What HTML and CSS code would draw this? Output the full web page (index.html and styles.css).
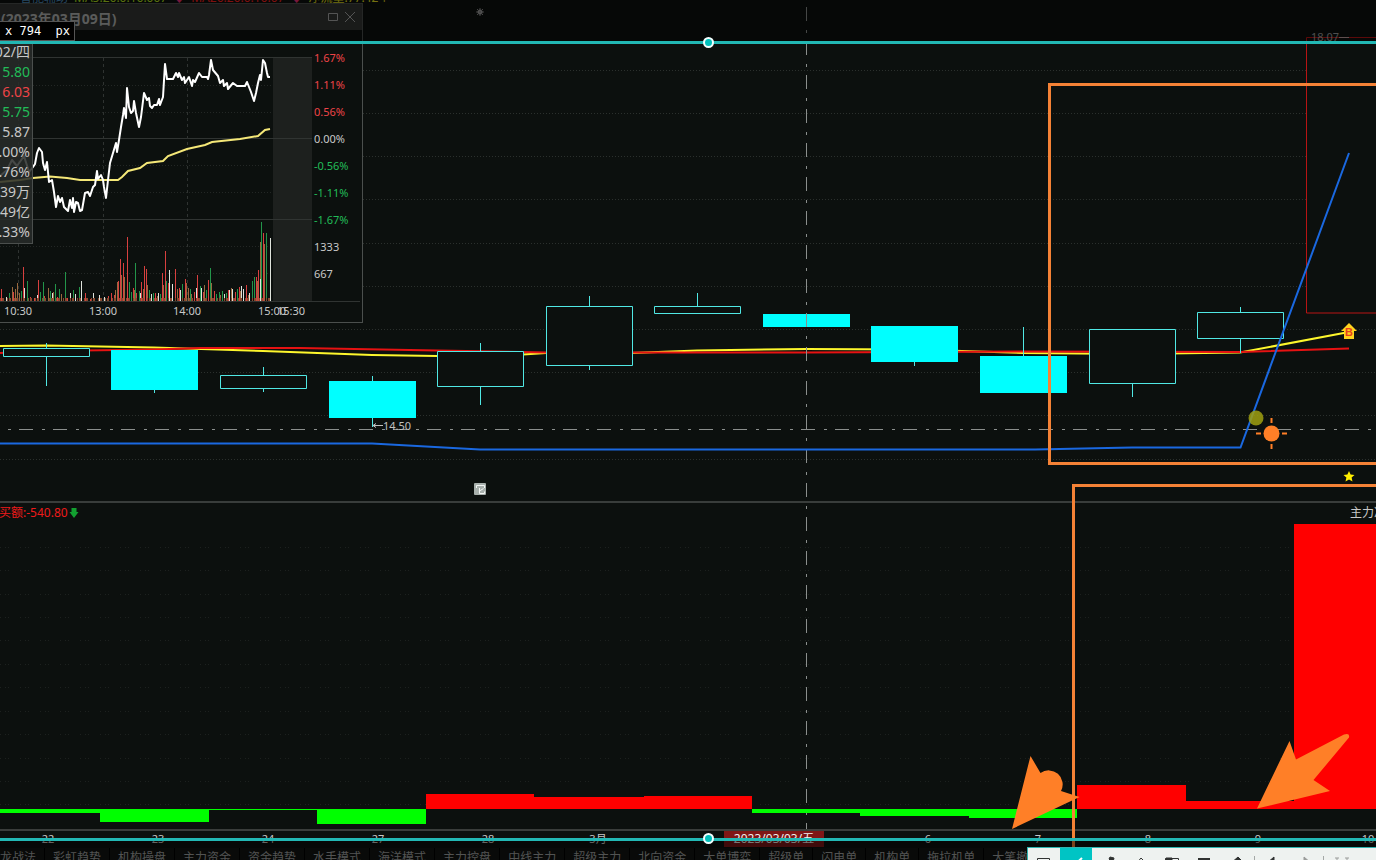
FILE: index.html
```html
<!DOCTYPE html>
<html lang="zh-CN">
<head>
<meta charset="utf-8">
<title>K线图</title>
<link rel="stylesheet" href="styles.css">
</head>
<body>
<div class="screen">
  <header class="ticker">
    <span class="t-blue">智能辅助</span>
    <span class="t-lime">MA5:26.0:16.007</span><span class="t-pink">⬇</span>
    <span class="t-red">MA26:26.0:16.07</span><span class="t-pink">⬇</span>
    <span class="t-yellow">净流量:77.42↑</span>
  </header>

  <main class="chart">
    <svg class="plot" viewBox="0 0 1376 830" preserveAspectRatio="xMinYMin slice" role="img" aria-label="K线">
      <g class="grid">
        <path d="M363 70.500H1306M363 113.500H1306M363 156.500H1306M363 199.500H1306M363 243.500H1306M363 286.500H1306M0 329.500H1376M0 372.500H1376M0 415.500H1376M0 459.500H1376"/>
        <path class="faint" d="M0 547.500H1376M0 570.500H1376M0 594.500H1376M0 617.500H1376M0 640.500H1376M0 664.500H1376M0 687.500H1376M0 711.500H1376M0 734.500H1376M0 758.500H1376M0 781.500H1376M0 804.500H1376"/>
      </g>
      <path class="rule" d="M0 502H1376"/>
      <path class="ma-yellow" d="M0 346 46 345.500 154 347.500 263 351 372 355 437 356 480 356 523 354.500 546 353 632 353 697 350.500 806 349 914 349.500 1023 353 1132 354 1240 352.500 1349 332"/>
      <path class="ma-red" d="M0 353 46 351 154 349.500 200 348 300 348 437 350.500 546 352.500 806 352.500 914 352 1023 351.500 1240 352 1349 348.500"/>
      <g class="hollow">
        <path d="M3.500 348.500h86v8h-86zM220.500 375.500h86v13h-86zM437.500 351.500h86v35h-86zM546.500 306.500h86v59h-86zM654.500 306.500h86v7h-86zM1089.500 329.500h86v54h-86zM1197.500 312.500h86v26h-86z"/>
      </g>
      <path class="wick" d="M46.500 343v5M46.500 357v29M154.500 390v3M263.500 367v8M263.500 389v3M372.500 376v5M372.500 418v9M480.500 343v8M480.500 387v18M589.500 296v10M589.500 366v4M697.500 293v13M914.500 362v4M1023.500 327v29M1132.500 384v13M1240.500 307v5M1240.500 339v14"/>
      <path class="solid" d="M111 350h87v40h-87zM329 381h87v37h-87zM763 314h87v13h-87zM871 326h87v36h-87zM980 356h87v37h-87z"/>
      <path class="limit" d="M1376 37.500H1306.500V313H1376"/>
      <path class="cross" d="M-15 429.500H1376M806.500 7V829"/>
      <path class="ma-blue" d="M0 443.500H372L480 449.500H1035L1132 447.500H1240.500L1349 153"/>
      <path class="lead" d="M373 425.500H383M373 425.500l3-2M373 425.500l3 2"/>
      <text class="price" x="383" y="430">14.50</text>
      <text class="price high" x="1311" y="41">18.07</text>
      <path class="lead high" d="M1339 37.500h10"/>

      <g class="up"><path d="M426 794h108v3h110v-1h108v13H426zM1077 785h109v16h108V524h82v285H1077z"/></g>
      <path class="down" d="M0 809H426v15H317V810H209v12H100v-9H0zM752 809h325v9H969v-2H860v-3H752z"/>

      <g class="badge"><rect x="474" y="483" width="12" height="12" rx="1"/><path d="M476.500 488v-2.500h8v2.500M479.500 488v5.500h5v-2M479.500 491l4-2.500"/></g>
      <path class="house" d="M1349 323l8 8h-3v8h-10v-8h-3z"/>
      <text class="house-b" x="1349" y="336">B</text>
      <path class="star" d="M1349 471l1.600 3.600 3.900.4-2.900 2.600.9 3.900-3.500-2-3.500 2 .9-3.900-2.900-2.600 3.900-.4z"/>
      <g class="glint"><circle cx="480" cy="12" r="2.500"/><path d="M480 8v8M476 12h8M477 9l6 6M483 9l-6 6"/></g>

      <text class="label-red" x="-1" y="517">买额:-540.80</text>
      <path class="green-arrow" d="M71.500 508h5v4h2l-4.500 6-4.500-6h2z"/>
      <text class="label" x="1350" y="517">主力净额</text>

      <g class="frames">
        <path d="M1400 84.500H1049.500V463.500H1400M1400 485.500H1073.500V847"/>
      </g>
      <circle class="olive" cx="1256" cy="418" r="7.500"/>
      <g class="sun"><circle cx="1271.500" cy="433.500" r="8"/><path d="M1271.500 418v5M1271.500 444v5M1256 433.500h5M1282 433.500h5"/></g>
      <path class="arrow" d="M1012 829l18.500-73 10 17a14 14 0 0 1 20.500 18l18.500 6zM1257 808.500l32.500-67.500 6.500 18.500 48-25q6-2 5 3l-35.500 42.500 16.500 11z"/>
    </svg>
  </main>

  <div class="dates">
    <span>22</span><span>23</span><span>24</span><span>27</span><span>28</span><span>3月</span><span></span><span></span><span>6</span><span>7</span><span>8</span><span>9</span><span>10</span>
    <b class="date-tag">2023/03/03/五</b>
  </div>
  <nav class="tabs">
    <button>潜龙战法</button><button>彩虹趋势</button><button>机构操盘</button><button>主力资金</button><button>资金趋势</button><button>水手模式</button><button>海洋模式</button><button>主力控盘</button><button>中线主力</button><button>超级主力</button><button>北向资金</button><button>大单博弈</button><button>超级单</button><button>闪电单</button><button>机构单</button><button>拖拉机单</button><button>大笔撤单</button>
  </nav>

  <section class="popup">
    <div class="popup-head">
      <h2>(2023年03月09日)</h2>
      <button class="win" aria-label="最大化"><svg viewBox="0 0 12 12"><path d="M1.500 2.500h9v7h-9z"/></svg></button>
      <button class="win" aria-label="关闭"><svg viewBox="0 0 12 12"><path d="M1 1l10 10M11 1L1 11"/></svg></button>
    </div>
    <div class="popup-body">
      <svg class="intraday" viewBox="0 30 312 272" role="img" aria-label="分时图">
        <rect class="after" x="273" y="58" width="39" height="243"/>
        <path class="i-solid" d="M0 57.500H312M0 138.500H312M0 219.500H312M0 301.500H360"/>
        <path class="i-dot" d="M0 85.500H272M0 112.500H272M0 165.500H272M0 192.500H272M0 246.500H272M0 273.500H272"/>
        <path class="i-dash" d="M18.500 58V301M103.500 58V301M187.500 58V301"/>
        <g class="vols">
          <path class="r" d="M1.500 301v-12M13.500 301v-9M23.500 301v-34M38.500 301v-21M114.500 301v-6M30.500 301v-4M34.500 301v-3M44.500 301v-5M57.500 301v-4M67.500 301v-3M81.500 301v-5M85.500 301v-8M90.500 301v-2M108.500 301v-5M111.500 301v-8M118.500 301v-20M120.500 301v-42M123.500 301v-38M127.500 301v-64M133.500 301v-13M136.500 301v-8M141.500 301v-19M144.500 301v-35M146.500 301v-32M155.500 301v-8M162.500 301v-28M165.500 301v-50M168.500 301v-18M175.500 301v-32M179.500 301v-13M185.500 301v-22M194.500 301v-9M197.500 301v-26M203.500 301v-9M208.500 301v-21M214.500 301v-10M228.500 301v-11M235.500 301v-9M239.500 301v-14M246.500 301v-16M256.500 301v-24M258.500 301v-31M263.500 301v-68"/>
          <path class="g" d="M9.500 301v-8M21.500 301v-10M27.500 301v-20M40.500 301v-9M43.500 301v-19M50.500 301v-10M55.500 301v-17M59.500 301v-12M65.500 301v-29M73.500 301v-11M79.500 301v-14M129.500 301v-19M131.500 301v-9M135.500 301v-38M139.500 301v-10M149.500 301v-11M153.500 301v-8M160.500 301v-7M166.500 301v-20M172.500 301v-6M182.500 301v-17M190.500 301v-12M200.500 301v-15M206.500 301v-11M210.500 301v-33M216.500 301v-7M219.500 301v-9M222.500 301v-10M226.500 301v-8M237.500 301v-12M243.500 301v-7M252.500 301v-20M254.500 301v-24M261.500 301v-79M266.500 301v-68"/>
          <path class="b" d="M12.500 301v-14M15.500 301v-12M17.500 301v-18M19.500 301v-8M48.500 301v-13M53.500 301v-9M61.500 301v-7M115.500 301v-11M117.500 301v-19M121.500 301v-26M124.500 301v-24M134.500 301v-11M143.500 301v-12M147.500 301v-16M157.500 301v-5M163.500 301v-16M177.500 301v-12M186.500 301v-18M188.500 301v-13M191.500 301v-7M204.500 301v-16M211.500 301v-18M220.500 301v-6M231.500 301v-13M240.500 301v-10M248.500 301v-6M257.500 301v-20M260.500 301v-59M264.500 301v-57"/>
          <path class="w" d="M6.500 301v-4M24.500 301v-13M37.500 301v-6M52.500 301v-8M70.500 301v-8M75.500 301v-7M81.500 301v-20M93.500 301v-8M99.500 301v-6M104.500 301v-4M140.500 301v-8M151.500 301v-7M158.500 301v-8M169.500 301v-31M172.500 301v-17M180.500 301v-11M196.500 301v-13M201.500 301v-13M224.500 301v-7M229.500 301v-11M232.500 301v-12M241.500 301v-15M243.500 301v-12M249.500 301v-8M260.500 301v-22M270.500 301v-63"/>
          <path class="filler" d="M0 299.500H270"/>
        </g>
        <path class="avg" d="M0 182 20 180 33 178 50 176.500 67 178 80 180H118L122 177 128 171 140 168 147 163 163 161 168 156 187 149 205 145 212 142 240 139 258 136 265 130 270 129"/>
        <path class="now" d="M0 176 7 170 12 160 17 166 24 156 29 172 33 167 35 164 37 153 39 148 42 152 43 163 45 170 47 162 49 182 52 180 54 192 56 207 58 196 60 202 62 198 64 207 68 211 70 200 72 208 73 198 74 212 76 202 78 203 80 211 82 210 85 193 88 192 90 196 93 187 95 185 97 171 98 179 101 175 103 180 104 187 106 198 108 180 110 163 113 153 116 143 117 152 119 140 121 127 123 115 124 108 126 118 127 88 129 107 131 113 133 111 134 101 136 113 139 127 141 117 144 93 147 100 149 98 150 106 152 108 154 105H157L159 99 160 105 163 97 165 64 167 79H173L176 73 178 77 179 73 182 80 184 77 185 83 189 77 192 86 193 80 195 82 199 73 202 77H207L208 79 209 75 211 60 213 70 218 76 220 83 223 80 224 86 227 83 228 89 233 83 237 86H245L247 82 249 87 251 92 254 101 256 93 258 83 260 75 261 80 263 60 265 63 267 73 268 77H270"/>
      </svg>
      <div class="scale">
        <span class="rise">1.67%</span><span class="rise">1.11%</span><span class="rise">0.56%</span><span>0.00%</span><span class="fall">-0.56%</span><span class="fall">-1.11%</span><span class="fall">-1.67%</span><span>1333</span><span>667</span>
      </div>
    </div>
    <div class="hours"><span>10:30</span><span>13:00</span><span>14:00</span><span>15:00</span><span>15:30</span></div>
    <div class="quote">
      <span>03/02/四</span><span class="fall">15.80</span><span class="rise">16.03</span><span class="fall">15.75</span><span>15.87</span><span>0.00%</span><span>1.76%</span><span>9.39万</span><span>1.49亿</span><span>2.33%</span>
    </div>
  </section>

  <div class="shade shade-top"></div>
  <div class="shade shade-bottom"></div>
  <div class="selection"><i class="handle handle-top"></i><i class="handle handle-bottom"></i></div>
  <div class="size-tag">x 794&nbsp; px</div>

  <div class="tools">
    <button aria-label="矩形"><svg viewBox="0 0 16 16"><path d="M1.500 3.500h12v9h-12z"/></svg></button>
    <button class="active" aria-label="箭头"><svg viewBox="0 0 16 16"><path class="thick" d="M2 14L14 3"/></svg></button>
    <button aria-label="画笔"><svg viewBox="0 0 16 16"><path d="M3 14l2-5 6-6 3 3-6 6z"/><path class="ink" d="M10 2l4 1-1 4-4-3z"/></svg></button>
    <button aria-label="荧光笔"><svg viewBox="0 0 16 16"><path d="M3 14l1-5 5-6 4 4-7 6z"/></svg></button>
    <button aria-label="马赛克"><svg viewBox="0 0 16 16"><path d="M1.500 3.500h13v10h-13z"/><path class="ink" d="M2 3h6v6H2zM8 9h6v4H8z"/></svg></button>
    <button aria-label="文字"><svg viewBox="0 0 16 16"><path class="thick" d="M2 4h12M8 4v11"/></svg></button>
    <button aria-label="橡皮"><svg viewBox="0 0 16 16"><path class="ink" d="M10 2l5 5-6 7H6L2 9z"/></svg></button>
    <i class="sep"></i>
    <button aria-label="撤销"><svg viewBox="0 0 16 16"><path class="ink" d="M9 2v4q5 0 6 7-3-3-6-3v4L2 8z"/></svg></button>
    <button class="muted" aria-label="重做"><svg viewBox="0 0 16 16"><path class="ink" d="M7 2v4q-5 0-6 7 3-3 6-3v4l7-6z"/></svg></button>
    <i class="sep"></i>
    <button class="muted" aria-label="更多"><svg viewBox="0 0 16 16"><path d="M1 3h4M11 3h4M3 3v10h10V3"/></svg></button>
  </div>
</div>
</body>
</html>
```
FILE: styles.css
```css
* { box-sizing: border-box; }
body {
  margin: 0;
  background: #0c100e;
  color: #c8c8c8;
  font: 11px/16px "Noto Sans", "Noto Sans CJK SC", sans-serif;
}
button { border: 0; padding: 0; background: none; color: inherit; font: inherit; }
.screen {
  position: relative;
  display: flex;
  flex-direction: column;
  height: 100vh;
  overflow: hidden;
}

.ticker {
  position: absolute;
  z-index: 1;
  top: -8px;
  left: 20px;
  display: flex;
  gap: 6px;
  font-size: 12px;
  line-height: 12px;
  white-space: nowrap;
}
.t-blue { color: #4f8fc0; }
.t-lime { color: #b4e020; }
.t-pink { color: #f03078; }
.t-red { color: #ff2020; }
.t-yellow { color: #e8e020; }

.chart {
  flex: 1;
  min-height: 0;
  border-bottom: 2px solid #3a3d3b;
}
.plot { display: block; width: 100%; height: 100%; fill: none; overflow: visible; }
.grid path { stroke: #2b302d; stroke-dasharray: 1 2; }
.grid .faint { stroke: #1d211f; stroke-dasharray: 1 4 1 2 1 11; }
.rule { stroke: #393d3b; stroke-width: 2; }
.ma-yellow { stroke: #fdf62c; stroke-width: 2; }
.ma-red { stroke: #e61212; stroke-width: 2; }
.ma-blue { stroke: #1a68e0; stroke-width: 2; }
.hollow path { fill: #0c100e; stroke: #50e8e4; }
.wick { stroke: #50e8e4; }
.solid { fill: #00ffff; }
.limit { stroke: #b81414; }
.cross { stroke: #8b8f8d; stroke-dasharray: 14 9 3 8; }
.lead { stroke: #c0c0c0; }
.price { fill: #c0c0c0; }
.high { opacity: .8; }
.up { fill: #ff0000; }
.down { fill: #00ff00; }
.badge rect { fill: #a8b0ac; }
.badge path { stroke: #f4f6f5; }
.house { fill: #ffd21e; }
.house-b { fill: #e8401c; font: bold 11px "Liberation Sans", sans-serif; text-anchor: middle; }
.star { fill: #ffee00; }
.glint circle { fill: #b8b8b8; }
.glint path { stroke: #888; }
.label-red { fill: #ee1a1a; font-size: 12px; }
.label { fill: #c8c8c8; font-size: 12px; }
.green-arrow { fill: #12a030; }
.frames path { stroke: #f58236; stroke-width: 3; }
.olive { fill: #a0a010; opacity: .85; }
.sun circle { fill: #ff7f27; }
.sun path { stroke: #ff7f27; stroke-width: 2; }
.arrow { fill: #ff7f27; }

.dates {
  position: relative;
  display: grid;
  grid-template-columns: repeat(13, 110px);
  flex: none;
  height: 17px;
  margin-left: -7px;
  text-align: center;
}
.date-tag {
  position: absolute;
  top: 0;
  left: 731px;
  width: 100px;
  background: #801616;
  color: #f0f0f0;
  font-size: 12px;
  font-weight: 400;
}
.tabs {
  display: flex;
  flex: none;
  height: 12px;
  margin-left: -20px;
  background: #121513;
  color: #a4a6a5;
  font-size: 12px;
  line-height: 20px;
  white-space: nowrap;
}
.tabs button { flex: none; height: 20px; padding: 0 8px; border-right: 1px solid #000; }

.popup {
  position: absolute;
  top: 3px;
  left: 0;
  width: 363px;
  background: #0c100e;
  border: 1px solid #4b4f4d;
  border-left: 0;
}
.popup-head {
  display: flex;
  align-items: center;
  gap: 5px;
  height: 26px;
  padding: 0 6px 0 1px;
  background: #343735;
}
.popup-head h2 { flex: 1; margin: 4px 0 0; color: #b4b6b5; font-size: 14px; }
.win, .win svg { display: block; width: 12px; height: 12px; }
.win path { fill: none; stroke: #a8a8a8; }
.popup-body { display: flex; gap: 2px; height: 272px; }
.intraday { flex: none; width: 312px; height: 272px; fill: none; overflow: visible; }
.after { fill: #1d201e; }
.i-solid { stroke: #303432; }
.i-dot { stroke: #232725; stroke-dasharray: 1 2; }
.i-dash { stroke: #2f3331; stroke-dasharray: 3 3; }
.r { stroke: #d8403f; }
.g { stroke: #23954a; }
.b { stroke: #99693f; }
.w { stroke: #dfe3dc; }
.filler { stroke: #8a4a30; stroke-width: 3; stroke-dasharray: 1 1 2 3; }
.avg { stroke: #f5e878; stroke-width: 2; }
.now { stroke: #fff; stroke-width: 2; stroke-linejoin: round; }
.scale { display: flex; flex-direction: column; padding-top: 14px; }
.scale span { line-height: 27px; }
.rise { color: #ee4448; }
.fall { color: #22bc58; }
.hours { position: relative; height: 20px; }
.hours span { position: absolute; top: 1px; left: 4px; }
.hours span:nth-child(2) { left: 89px; }
.hours span:nth-child(3) { left: 173px; }
.hours span:nth-child(4) { left: 258px; }
.hours span:nth-child(5) { left: 277px; }
.quote {
  position: absolute;
  top: 37px;
  left: 0;
  display: flex;
  flex-direction: column;
  align-items: flex-end;
  width: 33px;
  overflow: hidden;
  padding: 0 2px 1px 0;
  background: rgba(40, 43, 41, .86);
  border: 1px solid #4b4f4d;
  border-left: 0;
  font-size: 14px;
  line-height: 20px;
  white-space: nowrap;
}

.shade { position: absolute; left: 0; right: 0; background: rgba(0, 0, 0, .5); z-index: 2; }
.shade-top { top: 0; height: 42px; }
.shade-bottom { bottom: 0; height: 20px; }
.selection {
  position: absolute;
  z-index: 3;
  top: 41px;
  bottom: 19px;
  left: 0;
  right: 0;
  border: solid #22b8b4;
  border-width: 3px 0;
}
.handle {
  position: absolute;
  left: calc(50% + 15px);
  width: 11px;
  height: 11px;
  border: 2px solid #f4ffff;
  border-radius: 50%;
  background: #00c0bc;
}
.handle-top { top: -7px; }
.handle-bottom { bottom: -6px; }
.size-tag {
  position: absolute;
  z-index: 4;
  top: 21px;
  left: 0;
  padding: 0 4px 0 5px;
  background: #000;
  border: 1px solid #555;
  border-left: 0;
  color: #fff;
  font: 12px/18px "DejaVu Sans Mono", monospace;
}
.tools {
  position: absolute;
  z-index: 5;
  top: calc(100% - 13px);
  left: 1027px;
  right: 0;
  display: flex;
  align-items: center;
  height: 32px;
  overflow: hidden;
  background: #eef2f0;
  border: 1px solid #2fb4b0;
  border-right: 0;
}
.tools button { flex: none; display: grid; place-items: center; width: 32px; height: 32px; color: #303332; }
.tools svg { width: 16px; height: 16px; fill: none; stroke: currentColor; }
.tools .ink { fill: currentColor; }
.tools .thick { stroke-width: 2; }
.tools .active { background: #00c4c4; color: #fff; }
.tools .muted { color: #9a9d9b; }
.sep { flex: none; width: 1px; height: 14px; margin: 0 2px; background: #a4a8a6; }
```
